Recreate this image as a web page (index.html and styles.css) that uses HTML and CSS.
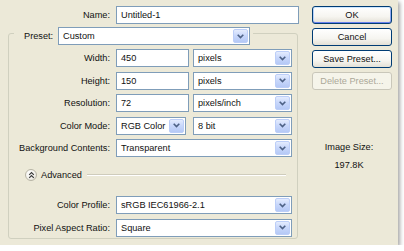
FILE: index.html
```html
<!DOCTYPE html>
<html>
<head>
<meta charset="utf-8">
<link rel="stylesheet" href="styles.css">
</head>
<body>
<div class="dialog">
  <div class="main">
    <div class="row name-row">
      <span class="lbl lbl-name">Name:</span>
      <div class="field w-name">Untitled-1</div>
    </div>
    <div class="group">
      <div class="preset-head">
        <span class="lbl-preset">Preset:</span>
        <div class="field select w-preset"><span class="val">Custom</span><span class="drop"><svg width="7" height="5" viewBox="0 0 7 5"><path d="M0.7 0.7 L3.5 3.5 L6.3 0.7" fill="none" stroke="#4D6185" stroke-width="1.6"/></svg></span></div>
      </div>
      <div class="rows top-rows">
        <div class="row">
          <span class="lbl">Width:</span>
          <div class="field w-num">450</div>
          <div class="field select w-unit"><span class="val">pixels</span><span class="drop"><svg width="7" height="5" viewBox="0 0 7 5"><path d="M0.7 0.7 L3.5 3.5 L6.3 0.7" fill="none" stroke="#4D6185" stroke-width="1.6"/></svg></span></div>
        </div>
        <div class="row">
          <span class="lbl">Height:</span>
          <div class="field w-num">150</div>
          <div class="field select w-unit"><span class="val">pixels</span><span class="drop"><svg width="7" height="5" viewBox="0 0 7 5"><path d="M0.7 0.7 L3.5 3.5 L6.3 0.7" fill="none" stroke="#4D6185" stroke-width="1.6"/></svg></span></div>
        </div>
        <div class="row">
          <span class="lbl">Resolution:</span>
          <div class="field w-num">72</div>
          <div class="field select w-unit"><span class="val">pixels/inch</span><span class="drop"><svg width="7" height="5" viewBox="0 0 7 5"><path d="M0.7 0.7 L3.5 3.5 L6.3 0.7" fill="none" stroke="#4D6185" stroke-width="1.6"/></svg></span></div>
        </div>
        <div class="row">
          <span class="lbl">Color Mode:</span>
          <div class="field select w-mode"><span class="val">RGB Color</span><span class="drop"><svg width="7" height="5" viewBox="0 0 7 5"><path d="M0.7 0.7 L3.5 3.5 L6.3 0.7" fill="none" stroke="#4D6185" stroke-width="1.6"/></svg></span></div>
          <div class="field select w-unit"><span class="val">8 bit</span><span class="drop"><svg width="7" height="5" viewBox="0 0 7 5"><path d="M0.7 0.7 L3.5 3.5 L6.3 0.7" fill="none" stroke="#4D6185" stroke-width="1.6"/></svg></span></div>
        </div>
        <div class="row">
          <span class="lbl">Background Contents:</span>
          <div class="field select w-wide"><span class="val">Transparent</span><span class="drop"><svg width="7" height="5" viewBox="0 0 7 5"><path d="M0.7 0.7 L3.5 3.5 L6.3 0.7" fill="none" stroke="#4D6185" stroke-width="1.6"/></svg></span></div>
        </div>
      </div>
      <div class="adv">
        <span class="toggle"><svg width="7" height="8" viewBox="0 0 7 8"><path d="M1.2 3.8 L3.5 1.5 L5.8 3.8 M1.2 6.8 L3.5 4.5 L5.8 6.8" fill="none" stroke="#3A3A3A" stroke-width="1.2"/></svg></span>
        <span class="adv-text">Advanced</span>
        <span class="rule"></span>
      </div>
      <div class="rows bottom-rows">
        <div class="row">
          <span class="lbl">Color Profile:</span>
          <div class="field select w-wide"><span class="val">sRGB IEC61966-2.1</span><span class="drop"><svg width="7" height="5" viewBox="0 0 7 5"><path d="M0.7 0.7 L3.5 3.5 L6.3 0.7" fill="none" stroke="#4D6185" stroke-width="1.6"/></svg></span></div>
        </div>
        <div class="row">
          <span class="lbl">Pixel Aspect Ratio:</span>
          <div class="field select w-wide"><span class="val">Square</span><span class="drop"><svg width="7" height="5" viewBox="0 0 7 5"><path d="M0.7 0.7 L3.5 3.5 L6.3 0.7" fill="none" stroke="#4D6185" stroke-width="1.6"/></svg></span></div>
        </div>
      </div>
    </div>
  </div>
  <div class="side">
    <div class="btn btn-default">OK</div>
    <div class="btn">Cancel</div>
    <div class="btn">Save Preset...</div>
    <div class="btn btn-disabled">Delete Preset...</div>
    <div class="size">
      <div>Image Size:</div>
      <div>197.8K</div>
    </div>
  </div>
</div>
</body>
</html>
```

FILE: styles.css
```css
* { box-sizing: border-box; margin: 0; padding: 0; }
html, body { background: #ffffff; }
body {
  margin: 0;
  font-family: "Liberation Sans", Arial, sans-serif;
  font-size: 9.2px;
  color: #111;
}
.dialog {
  width: 398px;
  height: 245px;
  background: #ECE9D8;
  display: flex;
  padding-top: 6px;
  box-shadow: 2px 2px 4px rgba(0, 0, 0, 0.35);
}
.main {
  width: 300px;
  display: flex;
  flex-direction: column;
}
.row {
  display: flex;
  align-items: center;
  height: 18px;
}
.lbl {
  width: 107px;
  padding-right: 6px;
  text-align: right;
  white-space: nowrap;
}
.lbl-name { width: 116px; }
.field {
  height: 18px;
  border: 1px solid #7F9DB9;
  background: #fff;
  display: flex;
  align-items: center;
  padding-left: 4px;
  white-space: nowrap;
}
.select { padding-right: 1px; }
.select .val { flex: 1; }
.drop {
  width: 15px;
  height: 14px;
  border: 1px solid #BCCEF8;
  border-radius: 2px;
  background: linear-gradient(180deg, #E4ECFE 0%, #C9D8FB 45%, #B5C9F6 100%);
  display: flex;
  align-items: center;
  justify-content: center;
}
.w-name { width: 183px; }
.w-preset { width: 192px; }
.w-num { width: 73px; margin-right: 4px; }
.w-unit { width: 99px; }
.w-mode { width: 70px; margin-right: 7px; }
.w-wide { width: 176px; }

.group {
  margin-left: 8px;
  width: 290px;
  margin-top: 9px;
  border: 1px solid #D0D0BF;
  border-radius: 3px;
  display: flex;
  flex-direction: column;
  padding-bottom: 1px;
}
.preset-head {
  align-self: flex-start;
  display: flex;
  align-items: center;
  margin-top: -7px;
  margin-left: 5px;
  padding: 0 3px 0 10px;
  background: #ECE9D8;
}
.lbl-preset { width: 34px; }
.rows {
  display: flex;
  flex-direction: column;
  gap: 4.5px;
}
.top-rows { margin-top: 4px; }
.adv {
  display: flex;
  align-items: center;
  height: 16px;
  margin-top: 10px;
  padding-left: 16px;
}
.toggle {
  width: 12px;
  height: 12px;
  border-radius: 50%;
  border: 1px solid #B8B5A6;
  background: radial-gradient(circle at 40% 35%, #FFFFFF 0%, #F4F3EE 50%, #DAD7CB 100%);
  display: flex;
  align-items: center;
  justify-content: center;
}
.adv-text { margin-left: 4px; }
.rule {
  width: 199px;
  margin-left: 5px;
  height: 2px;
  border-top: 1px solid #CFCCBC;
  border-bottom: 1px solid #FFFFFF;
}
.bottom-rows { margin-top: 13px; }

.side {
  width: 98px;
  display: flex;
  flex-direction: column;
  padding-left: 12px;
  padding-right: 6px;
}
.btn {
  width: 80px;
  height: 18px;
  border: 1px solid #003C74;
  border-radius: 3px;
  background: linear-gradient(180deg, #FFFFFF 0%, #F6F5F0 60%, #E3E0D6 100%);
  display: flex;
  align-items: center;
  justify-content: center;
  margin-bottom: 4px;
  white-space: nowrap;
}
.btn-default {
  box-shadow: inset 0 1px 0 #CEE7FF, inset 0 -1px 0 #6982EE, inset 1px 0 0 #B8D2FA, inset -1px 0 0 #8FA8F2;
}
.btn-disabled {
  border-color: #C9C7BA;
  background: #F5F4EA;
  color: #ACA899;
}
.size {
  margin-top: 44px;
  margin-left: -12px;
  margin-right: -6px;
  text-align: center;
  line-height: 18px;
}
```
